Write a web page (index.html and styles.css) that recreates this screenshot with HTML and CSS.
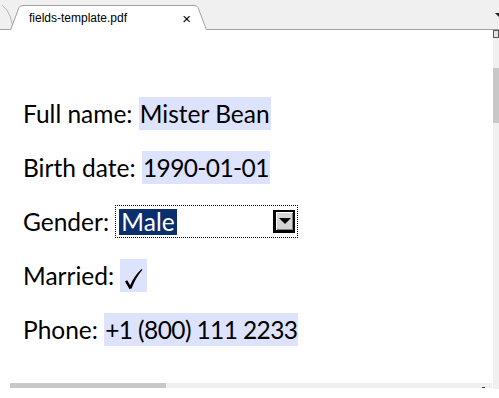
FILE: index.html
```html
<!DOCTYPE html>
<html lang="en">

<head>
    <meta charset="UTF-8">
    <title>fields-template.pdf</title>
    <link rel="stylesheet" href="styles.css">
</head>

<body>
    <!-- Tab strip -->
    <div class="tabbar">
        <svg class="prev-tab" width="14" height="26" viewBox="0 0 14 26">
            <path d="M2 1 Q8 6 10 12 L14 26" fill="none" stroke="#b4b4b4" />
        </svg>
        <div class="tab">
            <svg class="tab-shape" width="197" height="26" viewBox="0 0 197 26">
                <path d="M0.5 26 L9 3.5 Q10 1.5 13 1.5 L184 1.5 Q187 1.5 188 3.5 L196.5 26" fill="#fff" stroke="#a0a0a0" />
            </svg>
            <span class="tab-title">fields-template.pdf</span>
            <span class="tab-close">&times;</span>
        </div>
        <span class="tab-menu"></span>
    </div>

    <!-- Document -->
    <div class="viewer">
        <div class="page">
            <div class="row">Full name: <span class="field">Mister Bean</span></div>
            <div class="row">Birth date: <span class="field num">1990-01-01</span></div>
            <div class="row">Gender: <span class="select"><span class="selected">Male</span><span class="drop"><span class="arrow"></span></span></span></div>
            <div class="row">Married: <span class="field check">
                <svg width="19" height="22" viewBox="0 0 19 22">
                    <path d="M1 13.5 L3.2 12.3 L6.2 17.2 Q10 8 17.6 1 L18.4 1.8 Q11.5 10 7.6 20.6 L5.4 21 Z" fill="#000" />
                </svg>
            </span></div>
            <div class="row">Phone: <span class="field num">+1 (800) 111 2233</span></div>
        </div>
        <div class="vscroll">
            <div class="vbutton"></div>
            <div class="vthumb"></div>
        </div>
    </div>

    <div class="hscroll">
        <div class="hthumb"></div>
        <div class="hbutton"></div>
    </div>
</body>

</html>
```

FILE: styles.css
```css
body {
    margin: 0;
    background: #fff;
    color: #000;
    font-family: 'Lato', 'Liberation Sans', sans-serif;
    width: 499px;
    height: 398px;
    overflow: hidden;
}

/* Tab strip */
.tabbar {
    height: 29px;
    background: #f0f0f0;
    border-bottom: 1px solid #a0a0a0;
    display: flex;
    align-items: flex-end;
}

.prev-tab {
    margin-bottom: -1px;
}

.tab {
    position: relative;
    width: 197px;
    height: 26px;
    margin-left: -4px;
    margin-bottom: -1px;
    display: flex;
    align-items: center;
    font-family: 'Liberation Sans', sans-serif;
    font-size: 12px;
    color: #000;
}

.tab-shape {
    position: absolute;
    left: 0;
    top: 0;
}

.tab-title {
    position: relative;
    padding-left: 19px;
    padding-top: 2px;
}

.tab-close {
    position: relative;
    margin-left: auto;
    margin-right: 16px;
    padding-top: 2px;
    font-size: 15px;
}

.tab-menu {
    margin-left: auto;
    align-self: center;
    width: 0;
    height: 0;
    border-left: 4px solid transparent;
    border-top: 4px solid #222;
}

/* Viewer */
.viewer {
    display: flex;
    height: 359px;
}

.page {
    flex: 1;
    display: flex;
    flex-direction: column;
    gap: 21px;
    padding: 67px 0 0 23px;
    font-size: 24.5px;
}

.row {
    height: 33px;
    display: flex;
    align-items: center;
    white-space: pre;
}

.field {
    background: #dde3fd;
    height: 33px;
    display: flex;
    align-items: center;
    padding: 0 1px;
}

.num {
    letter-spacing: -0.6px;
}

.check {
    width: 27px;
    box-sizing: border-box;
    padding: 7px 0 0 4px;
}

.select {
    width: 183px;
    height: 33px;
    box-sizing: border-box;
    border: 1px dotted #000;
    display: flex;
    align-items: center;
    padding: 0 2px 0 3px;
}

.selected {
    background: #0a2f6e;
    color: #fff;
    height: 26px;
    display: flex;
    align-items: center;
    padding: 0 2px;
}

.drop {
    margin-left: auto;
    width: 22px;
    height: 23px;
    box-sizing: border-box;
    border: 2px solid #000;
    border-width: 2px 2px 3px 3px;
    background: #d4d4d4;
    box-shadow: inset 1px 1px 0 #fff, inset -1px -1px 0 #808080;
    display: flex;
    align-items: center;
    justify-content: center;
}

.arrow {
    width: 0;
    height: 0;
    border-left: 6px solid transparent;
    border-right: 6px solid transparent;
    border-top: 6px solid #000;
}

/* Scrollbars */
.vscroll {
    width: 6px;
    background: #f0f0f0;
}

.vbutton {
    height: 8px;
    box-sizing: border-box;
    border: 1px solid #555;
    background: #e4e4e4;
}

.vthumb {
    margin-top: 30px;
    height: 55px;
    background: #c8c8c8;
}

.hscroll {
    margin-left: 10px;
    margin-top: -6px;
    width: 482px;
    height: 5px;
    background: #f0f0f0;
    display: flex;
}

.hthumb {
    width: 156px;
    background: #c8c8c8;
}

.hbutton {
    margin-left: auto;
    margin-right: 7px;
    margin-top: 4px;
    width: 3px;
    height: 1px;
    background: #333;
}
```
